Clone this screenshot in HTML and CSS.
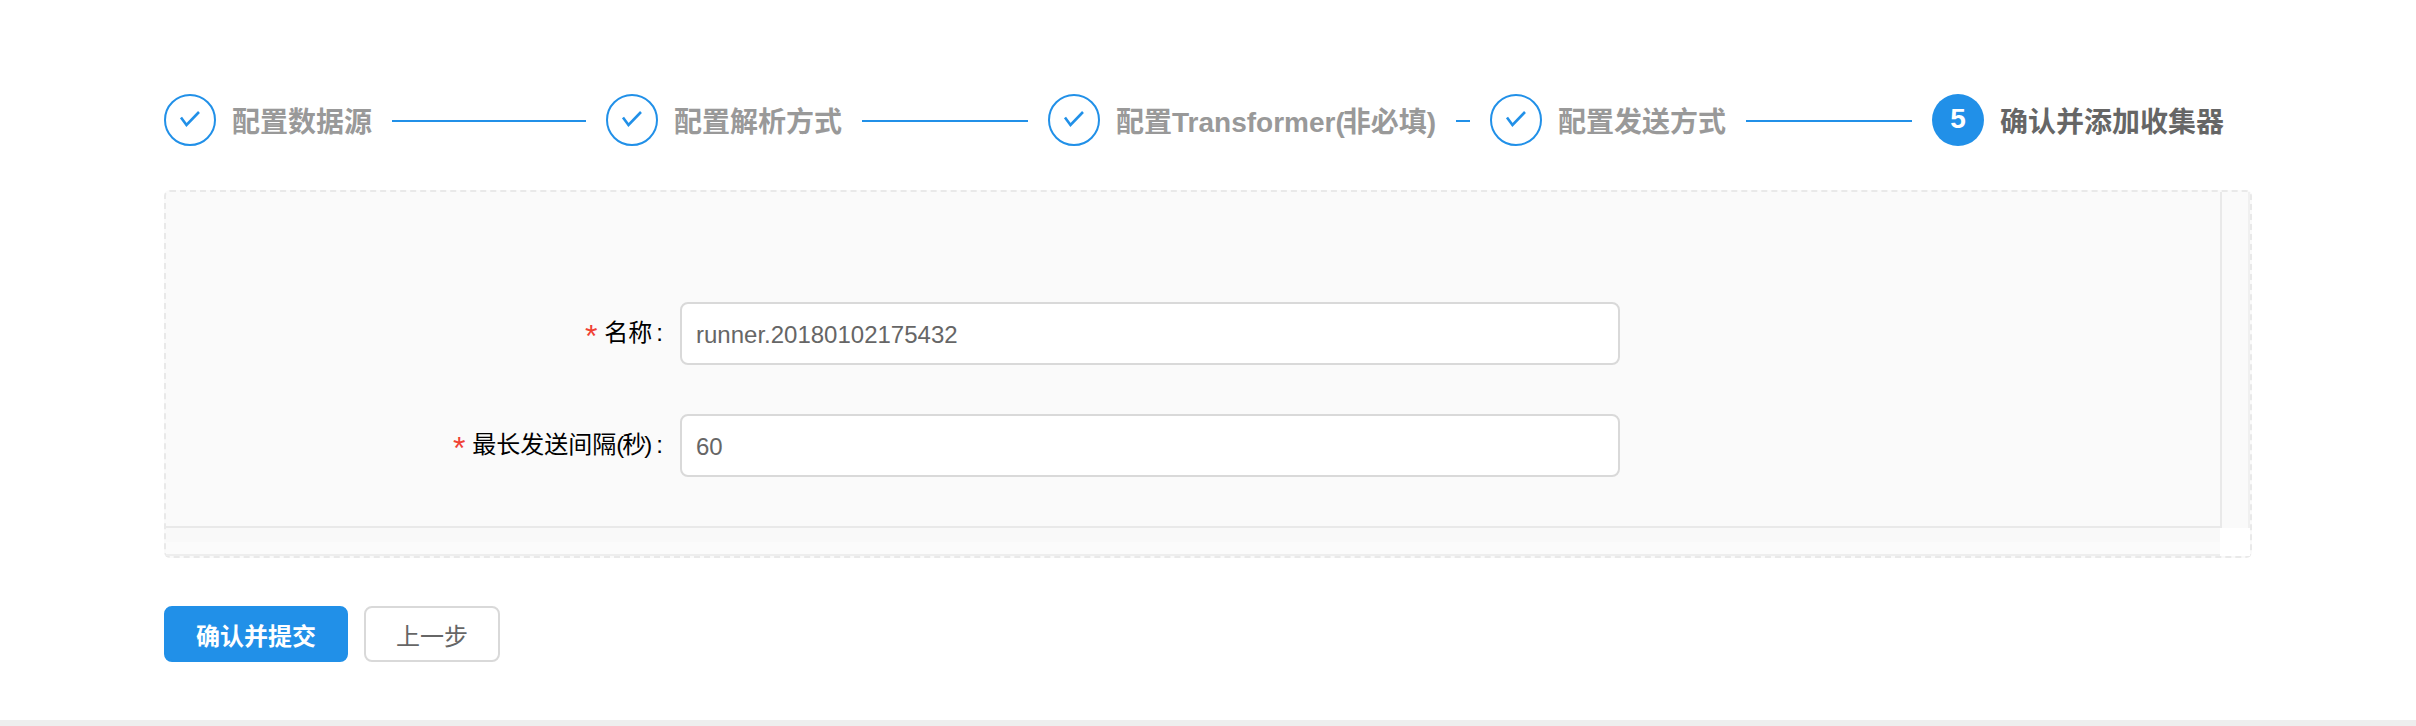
FILE: index.html
```html
<!DOCTYPE html>
<html lang="zh-CN">

<head>
    <meta charset="UTF-8">
    <title>确认并添加收集器</title>
    <link rel="stylesheet" href="styles.css">
</head>

<body>
    <main class="content">
        <div class="steps">
            <div class="step">
                <svg class="step-icon" viewBox="0 0 52 52"><circle cx="26" cy="26" r="25" /><path d="M17 23.5l5.5 7.5L35 18" /></svg>
                <span class="step-title">配置数据源</span>
                <span class="step-line"></span>
            </div>
            <div class="step">
                <svg class="step-icon" viewBox="0 0 52 52"><circle cx="26" cy="26" r="25" /><path d="M17 23.5l5.5 7.5L35 18" /></svg>
                <span class="step-title">配置解析方式</span>
                <span class="step-line"></span>
            </div>
            <div class="step">
                <svg class="step-icon" viewBox="0 0 52 52"><circle cx="26" cy="26" r="25" /><path d="M17 23.5l5.5 7.5L35 18" /></svg>
                <span class="step-title">配置Transformer<span class="paren">(</span>非必填)</span>
                <span class="step-line"></span>
            </div>
            <div class="step">
                <svg class="step-icon" viewBox="0 0 52 52"><circle cx="26" cy="26" r="25" /><path d="M17 23.5l5.5 7.5L35 18" /></svg>
                <span class="step-title">配置发送方式</span>
                <span class="step-line"></span>
            </div>
            <div class="step step-current">
                <span class="step-number">5</span>
                <span class="step-title">确认并添加收集器</span>
            </div>
        </div>

        <div class="panel">
            <div class="panel-body">
                <div class="form-row">
                    <label class="form-label" for="runnerName"><span class="required">*</span>名称<span class="colon">:</span></label>
                    <input class="form-input" id="runnerName" type="text" value="runner.20180102175432">
                </div>
                <div class="form-row">
                    <label class="form-label" for="maxInterval"><span class="required">*</span>最长发送间隔<span class="paren-tight">(秒</span>)<span class="colon">:</span></label>
                    <input class="form-input" id="maxInterval" type="text" value="60">
                </div>
            </div>
            <div class="panel-side"></div>
            <div class="panel-bottom"></div>
            <div class="panel-corner"></div>
        </div>

        <div class="actions">
            <button class="btn btn-primary">确认并提交</button>
            <button class="btn">上一步</button>
        </div>
    </main>
    <div class="footer-bar"></div>
</body>

</html>
```

FILE: styles.css
```css
* {
    box-sizing: border-box;
}

body {
    margin: 0;
    height: 726px;
    display: flex;
    flex-direction: column;
    background-color: #fff;
    font-family: "Liberation Sans", "Noto Sans CJK SC", sans-serif;
    font-size: 24px;
    color: #000;
    overflow: hidden;
}

.content {
    flex: 1;
    padding: 94px 164px 0;
}

/* Steps */
.steps {
    display: flex;
    height: 52px;
}

.step {
    flex: 0 0 442px;
    display: flex;
    align-items: center;
}

.step-current {
    flex: 1;
}

.step-icon {
    flex: none;
    width: 52px;
    height: 52px;
    fill: none;
    stroke: #2190e8;
    stroke-width: 2;
}

.step-icon path {
    stroke-width: 2.6;
}

.step-number {
    flex: none;
    width: 52px;
    height: 52px;
    border-radius: 50%;
    background-color: #2190e8;
    color: #fff;
    font-size: 28px;
    font-weight: bold;
    line-height: 50px;
    text-align: center;
}

.step-title {
    flex: none;
    margin-left: 16px;
    font-size: 28px;
    font-weight: bold;
    color: #999;
}

.step-current .step-title {
    color: #666;
}

.paren {
    letter-spacing: -2px;
}

.step-line {
    flex: 1;
    height: 2px;
    margin: 2px 20px 0;
    background-color: #2190e8;
}

/* Panel with scroll tracks */
.panel {
    display: grid;
    grid-template-columns: 1fr 28px;
    grid-template-rows: 336px 28px;
    height: 368px;
    margin-top: 44px;
    border: 2px dashed #e9e9e9;
    border-radius: 6px;
    background-color: #fafafa;
}

.panel-body {
    padding-top: 110px;
    border-right: 2px solid #e9e9e9;
    border-bottom: 2px solid #e9e9e9;
}

.panel-side {
    border-right: 2px solid #f0f0f0;
}

.panel-bottom {
    border-bottom: 2px solid #eee;
    background: linear-gradient(#f9f9f9 55%, #fbfbfb 55%);
}

.panel-corner {
    margin-left: -2px;
    background-color: #fff;
}

.form-row {
    display: flex;
    align-items: center;
    margin-bottom: 49px;
}

.form-label {
    flex: 0 0 514px;
    padding-top: 2px;
    padding-right: 17px;
    line-height: 30px;
    text-align: right;
}

.required {
    margin-right: 7px;
    font-size: 32px;
    line-height: 1;
    vertical-align: -6px;
    color: #f04134;
}

.colon {
    margin-left: 4px;
}

.paren-tight {
    letter-spacing: -2px;
}

.form-input {
    width: 940px;
    height: 63px;
    padding: 2px 14px 0;
    border: 2px solid #d9d9d9;
    border-radius: 8px;
    background-color: #fff;
    font: inherit;
    color: #666;
}

/* Buttons */
.actions {
    display: flex;
    gap: 16px;
    margin-top: 48px;
}

.btn {
    height: 56px;
    padding: 0 30px;
    border: 2px solid #d9d9d9;
    border-radius: 8px;
    background-color: #fff;
    font: inherit;
    color: #666;
}

.btn-primary {
    width: 184px;
    padding: 0;
    border-color: #2190e8;
    background-color: #2190e8;
    font-weight: bold;
    color: #fff;
}

.footer-bar {
    flex: none;
    height: 6px;
    background-color: #eee;
}
```
